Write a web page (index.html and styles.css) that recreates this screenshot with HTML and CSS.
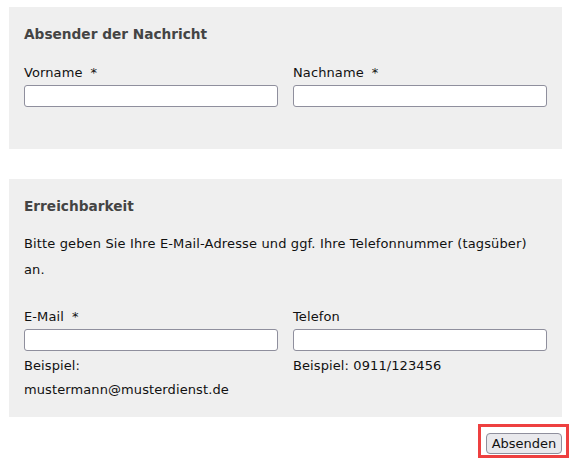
FILE: index.html
```html
<!DOCTYPE html>
<html lang="de">
<head>
<meta charset="utf-8">
<title>Kontakt</title>
<link rel="stylesheet" href="styles.css">
</head>
<body>
<form class="form">
  <section class="panel panel-sender">
    <h2 class="panel-title">Absender der Nachricht</h2>
    <div class="row row-first">
      <div class="field">
        <label class="label">Vorname<span class="req">*</span></label>
        <input class="input" type="text">
      </div>
      <div class="field">
        <label class="label">Nachname<span class="req">*</span></label>
        <input class="input" type="text">
      </div>
    </div>
  </section>
  <section class="panel panel-contact">
    <h2 class="panel-title">Erreichbarkeit</h2>
    <p class="intro">Bitte geben Sie Ihre E-Mail-Adresse und ggf. Ihre Telefonnummer (tagsüber) an.</p>
    <div class="row row-second">
      <div class="field">
        <label class="label">E-Mail<span class="req">*</span></label>
        <input class="input" type="text">
        <div class="hint">Beispiel: mustermann@musterdienst.de</div>
      </div>
      <div class="field">
        <label class="label">Telefon</label>
        <input class="input" type="text">
        <div class="hint">Beispiel: 0911/123456</div>
      </div>
    </div>
  </section>
  <div class="actions">
    <div class="highlight">
      <button class="button" type="button">Absenden</button>
    </div>
  </div>
</form>
</body>
</html>
```
FILE: styles.css
```css
html, body {
  margin: 0;
  padding: 0;
  background: #ffffff;
}
body {
  padding: 7px 0 0 9px;
  font-family: "DejaVu Sans", Verdana, sans-serif;
  font-size: 13px;
  color: #111111;
}
.form {
  width: 553px;
}
.panel {
  background: #efefef;
  padding: 15px;
  box-sizing: border-box;
  width: 553px;
}
.panel-sender {
  height: 142px;
}
.panel-contact {
  margin-top: 30px;
  height: 238px;
}
.panel-title {
  margin: 0;
  font-size: 13.7px;
  line-height: 24px;
  font-weight: bold;
  color: #444444;
}
.intro {
  margin: 13px 0 0 0;
  line-height: 26px;
  letter-spacing: 0.14px;
}
.row {
  display: grid;
  grid-template-columns: 254px 254px;
  column-gap: 15px;
}
.row-first {
  margin-top: 17px;
}
.row-second {
  margin-top: 24px;
}
.field {
  display: flex;
  flex-direction: column;
}
.label {
  line-height: 20px;
  margin-bottom: 2px;
  letter-spacing: 0.1px;
}
.req {
  margin-left: 8px;
}
.input {
  box-sizing: border-box;
  width: 254px;
  height: 22px;
  margin: 0;
  border: 1px solid #8f8f9d;
  border-radius: 3px;
  background: #ffffff;
}
.hint {
  margin-top: 3px;
  line-height: 24px;
  letter-spacing: 0.1px;
}
.actions {
  display: flex;
  justify-content: flex-end;
  margin-top: 7px;
  margin-right: -7px;
}
.highlight {
  border: 3px solid #ee4040;
  padding: 6px 4px 1px 5px;
}
.button {
  display: block;
  box-sizing: border-box;
  width: 76px;
  height: 21px;
  margin: 0;
  padding: 0;
  font-family: "DejaVu Sans", Verdana, sans-serif;
  font-size: 13px;
  color: #111111;
  background: #e9e9ed;
  border: 1px solid #8f8f9d;
  border-radius: 4px;
}
```
